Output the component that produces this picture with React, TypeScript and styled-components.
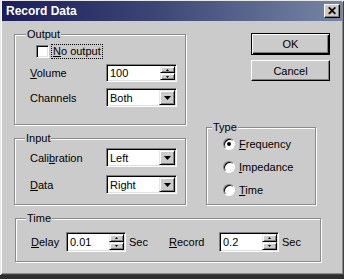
import React from "react";
import styled, { createGlobalStyle } from "styled-components";

const GlobalStyle = createGlobalStyle`
  html, body {
    margin: 0;
    padding: 0;
    background: #2e2e2e;
  }
  body {
    font-family: "Liberation Sans", Arial, sans-serif;
    font-size: 11px;
    color: #000;
  }
`;

const Window = styled.div`
  width: 344px;
  height: 275px;
  box-sizing: border-box;
  background: #cbcbcb;
  box-shadow: inset 1px 1px 0 #e8e8e8, inset -1px -1px 0 #404040,
    inset 2px 2px 0 #ffffff, inset -2px -2px 0 #8a8a8a;
  overflow: hidden;
`;

const TitleBar = styled.div`
  height: 20px;
  margin: 1px 2px 0;
  display: flex;
  align-items: center;
  justify-content: space-between;
  padding: 0 2px 0 4px;
  background: linear-gradient(90deg, #1c1c5a 0%, #3c4674 45%, #7686a4 100%);
`;

const TitleText = styled.span`
  color: #fff;
  font-weight: bold;
  font-size: 12px;
`;

const CloseButton = styled.div`
  width: 16px;
  height: 14px;
  box-sizing: border-box;
  background: #cbcbcb;
  border: 1px solid;
  border-color: #fff #000 #000 #fff;
  box-shadow: inset -1px -1px 0 #808080;
  display: flex;
  align-items: center;
  justify-content: center;
  font-weight: bold;
  font-size: 12px;
  line-height: 1;
`;

const TopSection = styled.div`
  display: flex;
  padding-left: 14px;
  gap: 20px;
`;

const LeftColumn = styled.div`
  display: flex;
  flex-direction: column;
  width: 172px;
`;

const RightColumn = styled.div`
  display: flex;
  flex-direction: column;
  width: 124px;
`;

const Group = styled.div<{ $w?: number; $h: number; $mt: number; $pt: number; $gap?: number }>`
  position: relative;
  box-sizing: border-box;
  width: ${(p) => (p.$w ? `${p.$w}px` : "auto")};
  height: ${(p) => p.$h}px;
  margin-top: ${(p) => p.$mt}px;
  padding: ${(p) => p.$pt}px 0 0 15px;
  border: 1px solid #8a8a8a;
  box-shadow: inset 1px 1px 0 #fff, 1px 1px 0 #fff;
  display: flex;
  flex-direction: column;
  gap: ${(p) => p.$gap ?? 0}px;
`;

const Legend = styled.span<{ $left: number }>`
  position: absolute;
  top: -7px;
  left: ${(p) => p.$left}px;
  padding: 0 1px;
  background: #cbcbcb;
  line-height: 13px;
`;

const Mnemonic = styled.span`
  text-decoration: underline;
`;

const CheckRow = styled.div`
  display: flex;
  align-items: center;
  height: 14px;
  margin-left: 6px;
  margin-bottom: 6px;
  gap: 3px;
`;

const CheckBox = styled.span`
  width: 13px;
  height: 13px;
  box-sizing: border-box;
  background: #fff;
  border: 1px solid;
  border-color: #808080 #fff #fff #808080;
  box-shadow: inset 1px 1px 0 #000, inset -1px -1px 0 #dfdfdf;
`;

const FocusLabel = styled.span`
  padding: 0 1px;
  outline: 1px dotted #000;
  line-height: 13px;
`;

const FieldRow = styled.div`
  display: flex;
  align-items: center;
`;

const FieldLabel = styled.span<{ $w: number }>`
  width: ${(p) => p.$w}px;
  flex: none;
`;

const Sunken = styled.div<{ $w: number; $h: number }>`
  width: ${(p) => p.$w}px;
  height: ${(p) => p.$h}px;
  box-sizing: border-box;
  display: flex;
  align-items: stretch;
  background: #fff;
  border: 1px solid;
  border-color: #808080 #fff #fff #808080;
  box-shadow: inset 1px 1px 0 #000, inset -1px -1px 0 #dfdfdf;
  padding: 1px;
`;

const FieldText = styled.span`
  flex: 1;
  padding-left: 2px;
  display: flex;
  align-items: center;
`;

const Raised = styled.span`
  box-sizing: border-box;
  background: #cbcbcb;
  border: 1px solid;
  border-color: #e8e8e8 #000 #000 #e8e8e8;
  box-shadow: inset 1px 1px 0 #fff, inset -1px -1px 0 #808080;
  display: flex;
  align-items: center;
  justify-content: center;
`;

const SpinColumn = styled.div`
  width: 15px;
  display: flex;
  flex-direction: column;
`;

const SpinHalf = styled(Raised)`
  flex: 1;
`;

const DropButton = styled(Raised)`
  width: 16px;
`;

const Arrow = ({ dir, size }: { dir: "up" | "down"; size: number }) => (
  <svg width={size * 2 - 1} height={size} viewBox={`0 0 ${size * 2 - 1} ${size}`}>
    <polygon
      points={
        dir === "down"
          ? `0,0 ${size * 2 - 1},0 ${size - 0.5},${size}`
          : `0,${size} ${size * 2 - 1},${size} ${size - 0.5},0`
      }
      fill="#000"
    />
  </svg>
);

const SpinBox = ({ value, w, h }: { value: string; w: number; h: number }) => (
  <Sunken $w={w} $h={h}>
    <FieldText>{value}</FieldText>
    <SpinColumn>
      <SpinHalf>
        <Arrow dir="up" size={2} />
      </SpinHalf>
      <SpinHalf>
        <Arrow dir="down" size={2} />
      </SpinHalf>
    </SpinColumn>
  </Sunken>
);

const ComboBox = ({ value }: { value: string }) => (
  <Sunken $w={71} $h={19}>
    <FieldText>{value}</FieldText>
    <DropButton>
      <Arrow dir="down" size={4} />
    </DropButton>
  </Sunken>
);

const ButtonStack = styled.div`
  display: flex;
  flex-direction: column;
  align-items: flex-end;
  margin-top: 12px;
  gap: 5px;
`;

const PushButton = styled.div<{ $default?: boolean }>`
  width: 79px;
  height: ${(p) => (p.$default ? 22 : 21)}px;
  box-sizing: border-box;
  display: flex;
  align-items: center;
  justify-content: center;
  background: #cbcbcb;
  border: 1px solid;
  border-color: ${(p) => (p.$default ? "#000" : "#fff #000 #000 #fff")};
  box-shadow: ${(p) =>
    p.$default
      ? "inset 1px 1px 0 #fff, inset -1px -1px 0 #000, inset -2px -2px 0 #808080"
      : "inset -1px -1px 0 #808080"};
`;

const RadioRow = styled.div`
  display: flex;
  align-items: center;
  height: 14px;
  margin-left: 1px;
  gap: 4px;
`;

const Radio = styled.span<{ $checked?: boolean }>`
  position: relative;
  width: 12px;
  height: 12px;
  box-sizing: border-box;
  border-radius: 50%;
  background: #fff;
  border: 1px solid;
  border-color: #808080 #fff #fff #808080;
  box-shadow: inset 1px 1px 0 #000;

  &::after {
    content: "";
    display: ${(p) => (p.$checked ? "block" : "none")};
    position: absolute;
    left: 3px;
    top: 3px;
    width: 4px;
    height: 4px;
    border-radius: 50%;
    background: #000;
  }
`;

const TimeGroupWrap = styled.div`
  padding-left: 15px;
`;

const Unit = styled.span<{ $w: number }>`
  width: ${(p) => p.$w}px;
  padding-left: 3px;
  flex: none;
  box-sizing: border-box;
`;

export default function App() {
  return (
    <>
      <GlobalStyle />
      <Window>
        <TitleBar>
          <TitleText>Record Data</TitleText>
          <CloseButton>✕</CloseButton>
        </TitleBar>

        <TopSection>
          <LeftColumn>
            <Group $h={91} $mt={13} $pt={9}>
              <Legend $left={11}>Output</Legend>
              <CheckRow>
                <CheckBox />
                <FocusLabel>
                  <Mnemonic>N</Mnemonic>o output
                </FocusLabel>
              </CheckRow>
              <FieldRow>
                <FieldLabel $w={76}>
                  <Mnemonic>V</Mnemonic>olume
                </FieldLabel>
                <SpinBox value="100" w={71} h={18} />
              </FieldRow>
              <FieldRow style={{ marginTop: 6 }}>
                <FieldLabel $w={76}>Channels</FieldLabel>
                <ComboBox value="Both" />
              </FieldRow>
            </Group>

            <Group $h={67} $mt={13} $pt={9} $gap={8}>
              <Legend $left={10}>Input</Legend>
              <FieldRow>
                <FieldLabel $w={76}>
                  Cali<Mnemonic>b</Mnemonic>ration
                </FieldLabel>
                <ComboBox value="Left" />
              </FieldRow>
              <FieldRow>
                <FieldLabel $w={76}>
                  <Mnemonic>D</Mnemonic>ata
                </FieldLabel>
                <ComboBox value="Right" />
              </FieldRow>
            </Group>
          </LeftColumn>

          <RightColumn>
            <ButtonStack>
              <PushButton $default>OK</PushButton>
              <PushButton>Cancel</PushButton>
            </ButtonStack>
            <Group $w={110} $h={78} $mt={46} $pt={9} $gap={9}>
              <Legend $left={5}>Type</Legend>
              <RadioRow>
                <Radio $checked />
                <span>
                  <Mnemonic>F</Mnemonic>requency
                </span>
              </RadioRow>
              <RadioRow>
                <Radio />
                <span>
                  <Mnemonic>I</Mnemonic>mpedance
                </span>
              </RadioRow>
              <RadioRow>
                <Radio />
                <span>
                  <Mnemonic>T</Mnemonic>ime
                </span>
              </RadioRow>
            </Group>
          </RightColumn>
        </TopSection>

        <TimeGroupWrap>
          <Group $w={306} $h={44} $mt={13} $pt={13}>
            <Legend $left={10}>Time</Legend>
            <FieldRow>
              <FieldLabel $w={35}>
                <Mnemonic>D</Mnemonic>elay
              </FieldLabel>
              <SpinBox value="0.01" w={60} h={20} />
              <Unit $w={43}>Sec</Unit>
              <FieldLabel $w={50}>
                <Mnemonic>R</Mnemonic>ecord
              </FieldLabel>
              <SpinBox value="0.2" w={60} h={20} />
              <Unit $w={30}>Sec</Unit>
            </FieldRow>
          </Group>
        </TimeGroupWrap>
      </Window>
    </>
  );
}
